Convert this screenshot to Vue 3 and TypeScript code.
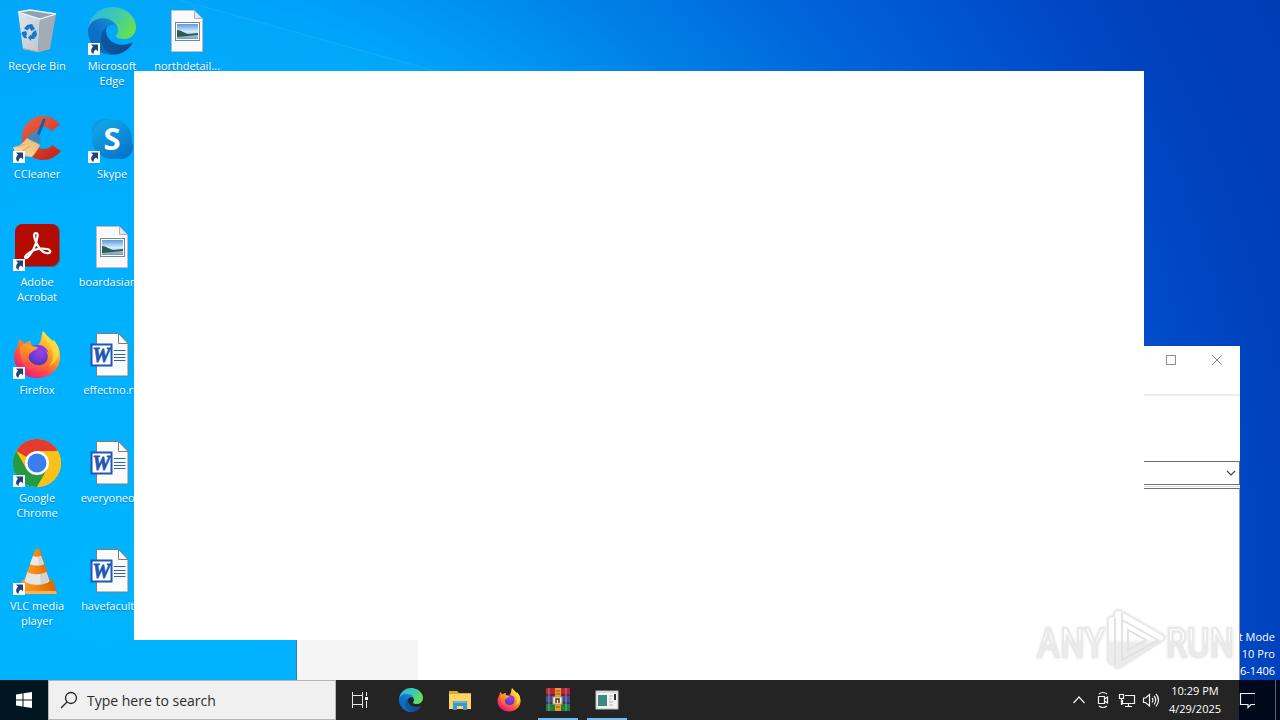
<script setup lang="ts">
import { ref } from 'vue'

interface Shortcut {
  label: string
  icon: string
  linked: boolean
  col: number
  row: number
}

const shortcuts: Shortcut[] = [
  { label: 'Recycle Bin', icon: 'bin', linked: false, col: 1, row: 1 },
  { label: 'CCleaner', icon: 'ccleaner', linked: true, col: 1, row: 2 },
  { label: 'Adobe Acrobat', icon: 'acrobat', linked: true, col: 1, row: 3 },
  { label: 'Firefox', icon: 'firefox', linked: true, col: 1, row: 4 },
  { label: 'Google Chrome', icon: 'chrome', linked: true, col: 1, row: 5 },
  { label: 'VLC media player', icon: 'vlc', linked: true, col: 1, row: 6 },
  { label: 'Microsoft Edge', icon: 'edge', linked: true, col: 2, row: 1 },
  { label: 'Skype', icon: 'skype', linked: true, col: 2, row: 2 },
  { label: 'boardasian...', icon: 'image', linked: false, col: 2, row: 3 },
  { label: 'effectno.rtf', icon: 'word', linked: false, col: 2, row: 4 },
  { label: 'everyoneo...', icon: 'word', linked: false, col: 2, row: 5 },
  { label: 'havefacult...', icon: 'word', linked: false, col: 2, row: 6 },
  { label: 'northdetail...', icon: 'image', linked: false, col: 3, row: 1 },
]

const pinned = [
  { name: 'Microsoft Edge', icon: 'edge', running: false },
  { name: 'File Explorer', icon: 'explorer', running: false },
  { name: 'Firefox', icon: 'firefox', running: false },
  { name: 'WinRAR', icon: 'winrar', running: true },
  { name: 'Application', icon: 'app', running: true },
]

const query = ref('')
</script>

<template>
  <div class="screen">
    <svg class="defs" width="0" height="0" aria-hidden="true">
      <defs>
        <linearGradient id="edgeA" x1="0" y1="0" x2="1" y2="0"><stop offset="0" stop-color="#0c59a4" /><stop offset="1" stop-color="#114a8b" /></linearGradient>
        <linearGradient id="edgeB" x1="1" y1="0" x2="0.3" y2="1"><stop offset="0" stop-color="#1b9de2" /><stop offset="0.5" stop-color="#0f74c9" /><stop offset="1" stop-color="#0866bd" /></linearGradient>
        <linearGradient id="edgeC" x1="0" y1="0.2" x2="1" y2="0.6"><stop offset="0" stop-color="#2fb4e4" /><stop offset="0.5" stop-color="#3cc9b4" /><stop offset="1" stop-color="#66e24e" /></linearGradient>
        <linearGradient id="foxA" x1="0.85" y1="0.05" x2="0.2" y2="0.95"><stop offset="0" stop-color="#fff44f" /><stop offset="0.4" stop-color="#ff9a1f" /><stop offset="0.7" stop-color="#ff4a4a" /><stop offset="1" stop-color="#e31587" /></linearGradient>
        <linearGradient id="foxC" x1="0.7" y1="0" x2="0.3" y2="1"><stop offset="0" stop-color="#ffb52a" /><stop offset="0.45" stop-color="#ff8521" /><stop offset="1" stop-color="#f8345f" /></linearGradient>
        <radialGradient id="foxB" cx="0.6" cy="0.3" r="0.7"><stop offset="0" stop-color="#a03ef0" /><stop offset="1" stop-color="#4b36b8" /></radialGradient>
        <linearGradient id="skyA" x1="0" y1="0" x2="0.6" y2="1"><stop offset="0" stop-color="#12aeea" /><stop offset="1" stop-color="#0878cc" /></linearGradient>
        <linearGradient id="ccA" x1="0" y1="0" x2="0.6" y2="1"><stop offset="0" stop-color="#f0654a" /><stop offset="1" stop-color="#c92a1c" /></linearGradient>
        <linearGradient id="broom" x1="0" y1="1" x2="1" y2="0"><stop offset="0" stop-color="#fbe2a8" /><stop offset="1" stop-color="#e8b56c" /></linearGradient>
        <linearGradient id="binL" x1="0" y1="0" x2="1" y2="1"><stop offset="0" stop-color="#dfe5ea" /><stop offset="1" stop-color="#bfc8d0" /></linearGradient>
        <linearGradient id="vlcA" x1="0" y1="0" x2="1" y2="0"><stop offset="0" stop-color="#ffa12b" /><stop offset="0.5" stop-color="#f78510" /><stop offset="1" stop-color="#d96500" /></linearGradient>
        <linearGradient id="pic" x1="0" y1="0" x2="0" y2="1"><stop offset="0" stop-color="#5a9be0" /><stop offset="0.5" stop-color="#d4ecf8" /><stop offset="1" stop-color="#6f9fc0" /></linearGradient>
        <linearGradient id="markA" gradientUnits="userSpaceOnUse" x1="0" y1="8" x2="0" y2="62"><stop offset="0.48" stop-color="#ffffff" /><stop offset="0.56" stop-color="#ececec" /></linearGradient>
      </defs>

      <symbol id="i-bin" viewBox="0 0 48 48">
        <path d="M5 5 17 3l26 4-16 5z" fill="#8fa2b0" />
        <path d="M5 5 27 11.500 25 45 10 42z" fill="url(#binL)" />
        <path d="M27 11.500 43 7 37 42 25 45z" fill="#a3acb5" />
        <path d="M5 5 17 3l26 4-16 5z" fill="none" stroke="#eef4f8" stroke-width="1.300" />
        <path d="M10 41.500 25 44.500 37 41.500" fill="none" stroke="#d9a184" />
        <g fill="#1878c8"><path d="m14 18 5-1 3 5-3.500 2-2-3-2 2.500-3.500-2z" /><path d="m20 25 3-2 1 5-3 4h-3v2l-3-3.500 3-3v1.500z" /><path d="m9 25 4-1 1.500 4-1.500-.5 1 4-3-.5-2.500-4z" /></g>
      </symbol>

      <symbol id="i-edge" viewBox="0 0 256 256">
        <g transform="translate(-4.630 -4.920)">
          <path fill="url(#edgeA)" d="M235.680 195.460a93.730 93.730 0 0 1-10.540 4.710 101.870 101.870 0 0 1-35.900 6.460c-47.320 0-88.540-32.550-88.540-74.320a31.480 31.480 0 0 1 16.430-27.260c-42.800 1.800-53.800 46.400-53.800 72.530 0 73.880 68.090 81.370 82.760 81.370 7.910 0 19.840-2.300 27-4.560l1.310-.44A128.340 128.340 0 0 0 241 201.100a4 4 0 0 0-5.320-5.640z" />
          <path fill="url(#edgeB)" d="M110.340 246.340A79.200 79.200 0 0 1 87.600 225a80.720 80.720 0 0 1 29.530-120c3.120-1.470 8.450-4.130 15.540-4a32.350 32.350 0 0 1 25.690 13 31.880 31.880 0 0 1 6.360 18.660c0-.21 24.460-79.600-80-79.600-43.900 0-80 41.660-80 78.210a130.150 130.150 0 0 0 12.110 56 128 128 0 0 0 156.380 67.110 75.550 75.550 0 0 1-62.780-8z" />
          <path fill="url(#edgeC)" d="M156.940 153.780c-.81 1.050-3.300 2.500-3.300 5.660 0 2.610 1.700 5.120 4.720 7.230 14.380 10 41.490 8.680 41.560 8.680a59.560 59.560 0 0 0 30.270-8.350 61.380 61.380 0 0 0 30.430-52.890c.26-22.410-8-37.310-11.340-43.910C228.090 28.760 182.350 4.920 132.610 4.920a128 128 0 0 0-128 126.200c.48-36.540 36.800-66.050 80-66.050 3.500 0 23.460.34 42 10.070 16.340 8.580 24.900 18.940 30.850 29.210 6.180 10.670 7.280 24.150 7.280 29.520s-2.740 13.330-7.800 19.910z" />
        </g>
      </symbol>

      <symbol id="i-image" viewBox="0 0 48 48">
        <path d="M8.500 3.500h23l8 8v33h-31z" fill="#fafafa" stroke="#c9b9b4" />
        <path d="M31.500 3.500v8h8z" fill="#d6ecfa" stroke="#b9aeb0" />
        <rect x="12.500" y="15.500" width="24" height="18" fill="#fff" stroke="#6f88a0" />
        <rect x="14" y="17" width="21" height="15" fill="url(#pic)" />
        <path d="M14 23c4 0 7 3 11 4 4 0 7-1 10-1v2l-10 1-11 1z" fill="#2f5a50" />
      </symbol>

      <symbol id="i-word" viewBox="0 0 48 48">
        <path d="M8.500 2.500h22l9.500 10v32.500H8.500z" fill="#fbfbfb" stroke="#7d7d7d" />
        <path d="M30.500 2.500v10H40z" fill="#fff" stroke="#7d7d7d" />
        <path d="M26 19.500h11.500M26 23.500h11.500M26 26.500h11.500M26 29.500h11.500" stroke="#2c62b5" stroke-width="1.200" />
        <rect x="3.500" y="13.500" width="20" height="21" fill="#fff" stroke="#1f57b8" stroke-width="2" />
        <text x="13.500" y="31" text-anchor="middle" font-family="Liberation Serif, serif" font-size="20" font-weight="700" font-style="italic" fill="#1f57b8" stroke="#1f57b8" stroke-width="0.800">W</text>
      </symbol>

      <symbol id="i-ccleaner" viewBox="0 0 48 48">
        <path d="M47 10C43 4 36 1 30 1 18 1 9 11 9 23s9 22 21 22c7 0 13-3 18-9l-9-6c-2 3-5 4-8 4-6 0-10-5-10-11s4-11 10-11c3 0 5 1 7 4z" fill="url(#ccA)" />
        <path d="M31 5c-2 6-5 12-7 17" stroke="#17609e" stroke-width="3" stroke-linecap="round" />
        <path d="M17 19c4-2 9 0 11 4l-2 7-13-6z" fill="#3f88be" />
        <path d="M14 23c4 3 9 4 13 7-2 5-5 8-8 12L3 40l-3-8c6 0 10-4 14-9z" fill="url(#broom)" />
        <path d="m4 32 8-3M8 37l9-6" stroke="#d9a765" fill="none" />
      </symbol>

      <symbol id="i-skype" viewBox="0 0 48 48">
        <circle cx="16" cy="16" r="12" fill="#0f97e2" /><circle cx="33" cy="32" r="12" fill="#0a74cb" />
        <circle cx="24" cy="24" r="20" fill="url(#skyA)" />
        <text x="24" y="35" text-anchor="middle" font-family="Open Sans, sans-serif" font-size="31" font-weight="700" fill="#fff">S</text>
      </symbol>

      <symbol id="i-acrobat" viewBox="0 0 48 48">
        <rect x="2" y="1" width="45" height="43" rx="8" fill="#7d1a14" opacity="0.500" />
        <rect x="2" y="1" width="44" height="42" rx="8" fill="#b30b00" />
        <path d="M23 10c-3 0-2 5 0 9 2 5 6 10 10 11 5 1 6-3 1-4-7-1-14 1-18 4-5 3-5 7-1 4 4-4 8-12 9-18 1-4 1-6-1-6z" fill="none" stroke="#fff" stroke-width="2.200" stroke-linejoin="round" />
      </symbol>

      <symbol id="i-firefox" viewBox="0 0 48 48">
        <path d="M30 0c3 4 7 7 9 11l2-2c4 6 7 12 6 19-1 11-11 19-23 19S1 38 1 26c0-5 2-9 4-12l1-6c2 1 4 3 5 5 2-2 4-3 7-3-1 2 0 3 1 5 3 0 5 0 7-2 3-4 2-9 4-13z" fill="url(#foxA)" />
        <circle cx="25" cy="25" r="11" fill="url(#foxB)" />
        <path d="M7 15c3-2 6-3 9-1 3 1 6 2 9 2-1 3-4 3-6 5-4 2-4 6-2 9 4 5 12 6 16 1 3-4 2-9-1-12 5 3 7 8 5 13-4 9-14 11-22 6C8 33 6 23 7 15z" fill="url(#foxC)" />
        <path d="M31 1c-1 7 8 12 9 21 1 5-1 10-4 13 7-3 11-9 10-17C44 10 34 7 31 1z" fill="#ffdf3d" opacity="0.800" />
      </symbol>

      <symbol id="i-chrome" viewBox="0 0 48 48">
        <circle cx="24" cy="24" r="24" fill="#fbc116" />
        <path d="M24 24 3.200 12A24 24 0 0 1 44.800 12z" fill="#e33b2e" />
        <path d="M3.200 12A24 24 0 0 0 24 48l10.400-18L24 24 13.600 30z" fill="#249a41" />
        <path d="M24 12h20.800A24 24 0 0 1 24 48l10.400-18z" fill="#fbc116" />
        <circle cx="24" cy="24" r="12" fill="#fff" /><circle cx="24" cy="24" r="9.500" fill="#3b7ded" />
      </symbol>

      <symbol id="i-vlc" viewBox="0 0 48 48">
        <path d="m9 33-4 14h39l-4-14z" fill="url(#vlcA)" />
        <path d="M5 44h38l1 3H5z" fill="#ffb54d" />
        <path d="M22 3q2-3 5 0l11 34c-3 6-25 6-28 0z" fill="url(#vlcA)" />
        <path d="m20 9-3 8c3 2 11 2 14 0l-3-8c-2 1-6 1-8 0z" fill="#e9e9e9" />
        <path d="m14.500 25-3 9c4 5 21 5 25 0l-3-9c-4 3-15 3-19 0z" fill="#e4e4e4" />
        <path d="m25 10 1 8 4-1-3-8zM27 27l1 11 8-4-3-9z" fill="#c2c4c6" opacity="0.600" />
      </symbol>

      <symbol id="i-explorer" viewBox="0 0 24 24">
        <path d="M1 3h8l2 2h12v16H1z" fill="#e5a823" />
        <path d="M1 6h22v15H1z" fill="#fcd462" />
        <path d="M5 13h14v9h-4v-4H9v4H5z" fill="#3b95d3" /><path d="M6 13h12v2H6z" fill="#66b5e5" />
      </symbol>

      <symbol id="i-winrar" viewBox="0 0 24 24">
        <path d="M0 0h24v8H0z" fill="#b52336" /><path d="M0 8h24v8H0z" fill="#3a4d9e" /><path d="M0 16h24v7H0z" fill="#1c8040" />
        <path d="M0 7h24M0 15h24" stroke="#25283a" /><path d="M3 0v23M20 0v23" stroke="#d3a8a4" opacity="0.700" />
        <path d="M9 0h6v23H9z" fill="#e89a2e" /><path d="M10 3h4M10 6h4M10 19h4" stroke="#8c5318" />
        <rect x="7" y="9" width="9" height="7" fill="#f6edda" stroke="#c29b55" /><path d="M10 15v-4h3v4" stroke="#46341f" fill="none" stroke-width="1.500" />
      </symbol>

      <symbol id="i-app" viewBox="0 0 24 24">
        <rect x="1" y="3" width="22" height="18" fill="#f4f4f4" stroke="#b8b8b8" />
        <rect x="3" y="7" width="9" height="11" fill="#3c8c7e" /><path d="M14 8h4M14 11h3M14 14h4M14 17h4" stroke="#b4b4b4" />
        <path d="M20 6v6" stroke="#27313a" stroke-width="2" /><path d="M2 4h20" stroke="#d7dbde" stroke-width="2" />
      </symbol>

      <symbol id="i-link" viewBox="0 0 12 12">
        <path d="M0 0h12v12H0z" fill="#fff" />
        <path d="M3 1.500h7v7L8 6.500C6 7.500 5.500 9 5.500 11 3 10 2 6.500 5 3.800z" fill="#22427c" />
      </symbol>
    </svg>

    <main class="desktop">
      <svg class="rays" viewBox="0 0 1280 680" preserveAspectRatio="none" aria-hidden="true">
        <path d="M180 0 435 71H0V0z" fill="#10b4ff" opacity="0.150" />
        <path d="M180 0 435 71" stroke="#40c0ff" opacity="0.300" />
      </svg>

      <ul class="icons">
        <li v-for="s in shortcuts" :key="s.label" :class="['col' + s.col, 'row' + s.row]">
          <button class="shortcut" type="button">
            <span class="pic">
              <svg class="big"><use :href="'#i-' + s.icon" /></svg>
              <svg v-if="s.linked" class="link"><use href="#i-link" /></svg>
            </span>
            <span class="label">{{ s.label }}</span>
          </button>
        </li>
      </ul>

      <p class="edition">Test Mode<br />Windows 10 Pro<br />Build 19041.vb_release.191206-1406</p>

      <section class="window back">
        <header class="titlebar">
          <button type="button" aria-label="Maximize"><svg width="12" height="12"><path d="M1.500 1.500h9v9h-9z" fill="none" stroke="#8a8a8a" /></svg></button>
          <button type="button" aria-label="Close"><svg width="12" height="12"><path d="m1 1 10 10M11 1 1 11" fill="none" stroke="#8a8a8a" /></svg></button>
        </header>
        <div class="toolbar"></div>
        <div class="address">
          <button type="button" aria-label="Show list"><svg width="10" height="8"><path d="m1 2 4 4 4-4" fill="none" stroke="#444" stroke-width="1.200" /></svg></button>
        </div>
        <div class="panes"><div class="side"></div><div class="files"></div></div>
      </section>

      <section class="window front"></section>

      <svg class="mark" width="200" height="70" viewBox="0 0 200 70" role="img" aria-label="ANY RUN">
        <g class="shade">
          <text x="37" y="52" text-anchor="middle">ANY</text>
          <text x="166" y="52" text-anchor="middle">RUN</text>
          <path d="M74 14q0-2 6-3l1-4q2-3 6-1l42 24q3 2 0 5L88 61q-3 3-7 1v-3q-6 1-7-4z" />
        </g>
        <path class="line" d="M81 59V13M88 8v7l36 20M88 15v40l37-20M94 25v20l18-10z" />
      </svg>
    </main>

    <footer class="taskbar">
      <button class="start" type="button" aria-label="Start">
        <svg width="16" height="16"><path d="m0 2.500 6.500-1V7.500H0zM7.500 1.300 16 0v7.500H7.500zM0 8.500h6.500v6L0 13.500zM7.500 8.500H16V16l-8.500-1.300z" fill="#fff" /></svg>
      </button>
      <label class="search">
        <svg width="18" height="18" viewBox="0 0 18 18"><circle cx="11" cy="7" r="5.500" fill="none" stroke="#222" stroke-width="1.300" /><path d="m7 11-6 6" stroke="#222" stroke-width="1.300" /></svg>
        <input v-model="query" type="text" placeholder="Type here to search" aria-label="Type here to search" />
      </label>
      <button class="task view" type="button" aria-label="Task View">
        <svg width="18" height="18"><path d="M1.500 1v3.500h10V1M1.500 17v-3.500h10V17M1.500 6.500v7M11.500 4.500v9M1.500 4.500v9M15.500 1v4M15.500 10v7" fill="none" stroke="#e8e8e8" /><path d="M14 6h3v3h-3z" fill="#fff" /></svg>
      </button>
      <nav class="pins">
        <button v-for="p in pinned" :key="p.name" :class="['task', { running: p.running }]" type="button" :aria-label="p.name">
          <svg class="small"><use :href="'#i-' + p.icon" /></svg>
        </button>
      </nav>
      <div class="tray">
        <button type="button" aria-label="Show hidden icons"><svg width="14" height="18"><path d="m1.500 12 5.500-6 5.500 6" /></svg></button>
        <button type="button" aria-label="Meet Now"><svg width="14" height="18"><path d="M2.500 5.500h6v7h-6zM8.500 8l3-2v6l-3-2M3 3q4-3 8 0M3 15q4 3 8 0" /></svg></button>
        <button type="button" aria-label="Network"><svg width="18" height="18"><path d="M7 4.500h9.500v8H4.500V9M10.500 12.500v3M7 15.500h7M1.500 3.500h4v4h-4zM3.500 7.500v6h1" /></svg></button>
        <button type="button" aria-label="Volume"><svg width="18" height="18"><path d="M1.500 7v4.500h2l4 3.500V3.500L3.500 7zM10 7q2 2 0 4.500M12 5q3.500 4 0 8.500M14 3q5 6 0 12.500" /></svg></button>
      </div>
      <button class="clock" type="button">10:29 PM<br />4/29/2025</button>
      <button class="notify" type="button" aria-label="Notifications"><svg width="18" height="18"><path d="M1.500 2.500h15v11H12l-3 3v-3H1.500z" /></svg></button>
    </footer>
  </div>
</template>

<style>
body {
  margin: 0;
  overflow: hidden;
}
</style>

<style scoped>
.screen {
  height: 100vh;
  display: flex;
  flex-direction: column;
  position: relative;
  font-family: 'Open Sans', 'Noto Sans', sans-serif;
  font-size: 11px;
  overflow: hidden;
}
.defs {
  position: absolute;
}
button {
  font: inherit;
  color: inherit;
  background: none;
  border: 0;
  padding: 0;
  display: flex;
  align-items: center;
  justify-content: center;
}
svg {
  display: block;
}
.desktop {
  flex: 1;
  min-height: 0;
  position: relative;
  background: radial-gradient(circle at 8% 88%, #00b4ff 0%, #00b0ff 28%, #00a5fa 46%, #007ee6 59%, #0064da 69%, #004cca 82%, #0041bc 90%, #003cb4 100%);
}
.rays {
  position: absolute;
  inset: 0;
  width: 100%;
  height: 100%;
}
.icons {
  list-style: none;
  margin: 0;
  padding: 7px 0 0;
  position: relative;
  display: grid;
  grid-template-columns: repeat(3, 74px);
  grid-auto-rows: 108px;
  column-gap: 1px;
}
.col1 { grid-column: 1; }
.col2 { grid-column: 2; }
.col3 { grid-column: 3; }
.row1 { grid-row: 1; }
.row2 { grid-row: 2; }
.row3 { grid-row: 3; }
.row4 { grid-row: 4; }
.row5 { grid-row: 5; }
.row6 { grid-row: 6; }
.shortcut {
  width: 100%;
  flex-direction: column;
  gap: 3px;
}
.pic {
  position: relative;
}
.big {
  width: 48px;
  height: 48px;
}
.link {
  position: absolute;
  left: 0;
  bottom: 0;
  width: 12px;
  height: 12px;
}
.label {
  line-height: 15px;
  color: #fff;
  text-shadow: 0 1px 1px rgba(0, 50, 110, 0.4);
}
.edition {
  position: absolute;
  right: 5px;
  bottom: 1px;
  margin: 0;
  color: #fff;
  text-align: right;
  line-height: 17px;
  white-space: nowrap;
}
.window {
  position: absolute;
  background: #fff;
}
.front {
  inset: 71px 136px 40px 134px;
}
.back {
  inset: 346px 40px 0 296px;
  display: flex;
  flex-direction: column;
  border-left: 1px solid #42799a;
}
.titlebar {
  height: 28px;
  display: flex;
  justify-content: flex-end;
}
.titlebar button {
  width: 46px;
}
.toolbar {
  height: 65px;
  margin-top: 20px;
  border-top: 2px solid #ededed;
}
.address {
  height: 22px;
  display: flex;
  justify-content: flex-end;
  border: 1px solid #6f6f6f;
}
.address button {
  width: 16px;
}
.panes {
  flex: 1;
  display: flex;
  margin-top: 1px;
  border-top: 1px solid #dcdcdc;
}
.side {
  width: 121px;
  background: #f5f5f5;
}
.files {
  flex: 1;
  margin-top: 1px;
  border-top: 1px solid #6f6f6f;
  border-right: 1px solid #9a9a9a;
}
.mark {
  position: absolute;
  right: 46px;
  bottom: 5px;
}
.shade {
  fill: url(#markA);
  stroke: #e9e9e9;
  stroke-width: 2;
  font-family: 'Liberation Sans Narrow', 'Roboto Condensed', 'Liberation Sans', sans-serif;
  font-size: 40px;
  filter: drop-shadow(0 0 1px rgba(0, 0, 0, 0.12));
}
.line {
  fill: none;
  stroke: #e2e2e2;
  stroke-width: 2;
}
.taskbar {
  height: 40px;
  display: flex;
  color: #fff;
  background: #242424;
}
.start {
  width: 48px;
  background: #001722;
}
.search {
  width: 288px;
  display: flex;
  align-items: center;
  gap: 9px;
  padding-left: 11px;
  box-sizing: border-box;
  background: #f0f0f0;
  border: 1px solid #b5b5b5;
}
.search input {
  flex: 1;
  min-width: 0;
  border: 0;
  padding: 0;
  outline: 0;
  background: none;
  font-family: inherit;
  font-size: 14px;
}
.search input::placeholder {
  color: #2c2c2c;
  opacity: 1;
}
.task {
  width: 48px;
  position: relative;
}
.view {
  margin-right: 3px;
}
.pins {
  display: flex;
  gap: 1px;
}
.small {
  width: 24px;
  height: 24px;
}
.running::after {
  content: '';
  position: absolute;
  left: 4px;
  right: 4px;
  bottom: 0;
  height: 2px;
  background: #76b9ed;
}
.tray {
  margin-left: auto;
  display: flex;
}
.tray button {
  width: 24px;
}
.tray path,
.notify path {
  fill: none;
  stroke: #f2f2f2;
  stroke-width: 1.2;
}
.clock {
  width: 64px;
  line-height: 18px;
  margin-right: 12px;
}
.notify {
  width: 41px;
  padding-right: 25px;
  box-sizing: border-box;
  background: linear-gradient(90deg, #00081c 0 36px, #56647c 36px 37px, #00081c 37px);
}
</style>
